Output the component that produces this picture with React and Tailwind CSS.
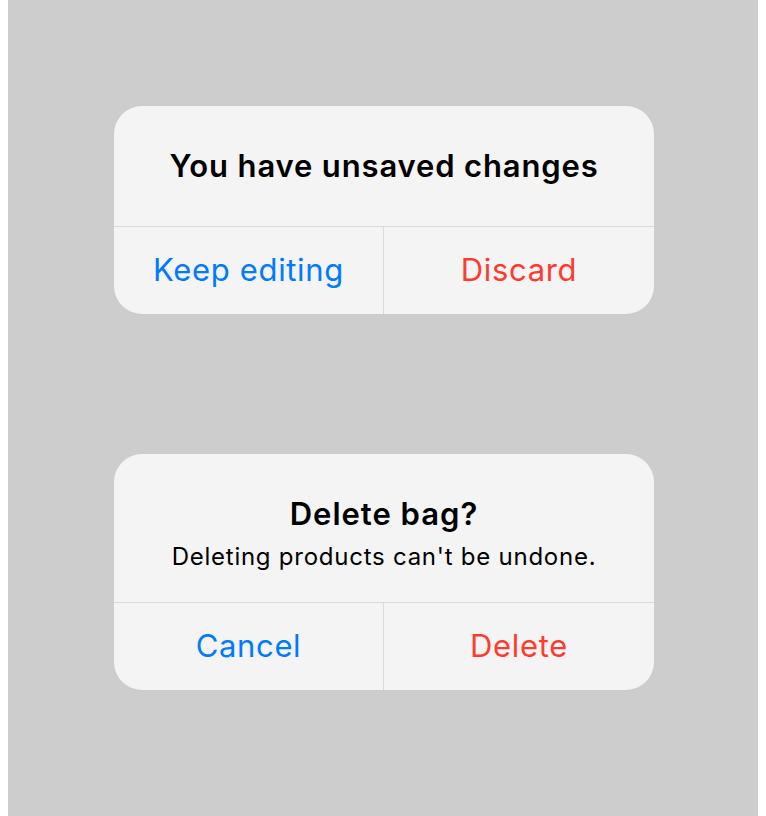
const font = { fontFamily: "Inter, 'Noto Sans', sans-serif" };

function Alert({ title, message, left, right }) {
  return (
    <div className="w-[540px] rounded-[28px] bg-[#f4f4f4] overflow-hidden">
      {message ? (
        <div className="h-[149px] flex flex-col items-center pt-[40px] border-b border-[#dadada]">
          <p className="text-[31px] leading-[40px] font-semibold tracking-[1px] text-black">{title}</p>
          <p className="mt-2 text-[24px] leading-[30px] tracking-[0.75px] text-black">{message}</p>
        </div>
      ) : (
        <div className="h-[121px] flex items-center justify-center border-b border-[#dadada]">
          <p className="text-[31px] leading-[40px] font-semibold tracking-[0.85px] text-black">{title}</p>
        </div>
      )}
      <div className="grid grid-cols-2 h-[87px]">
        <button
          type="button"
          className="flex items-center justify-center border-r border-[#dadada] text-[31px] tracking-[0.65px] text-[#007aff]"
        >
          {left}
        </button>
        <button
          type="button"
          className="flex items-center justify-center text-[31px] tracking-[0.65px] text-[#ff3b30]"
        >
          {right}
        </button>
      </div>
    </div>
  );
}

export default function App() {
  return (
    <div className="min-h-[816px] bg-white px-2" style={font}>
      <div className="min-h-[816px] bg-[#cdcdcd] flex flex-col items-center pt-[106px] gap-[140px] pl-[2px]">
        <Alert title="You have unsaved changes" left="Keep editing" right="Discard" />
        <Alert
          title="Delete bag?"
          message="Deleting products can't be undone."
          left="Cancel"
          right="Delete"
        />
      </div>
    </div>
  );
}
